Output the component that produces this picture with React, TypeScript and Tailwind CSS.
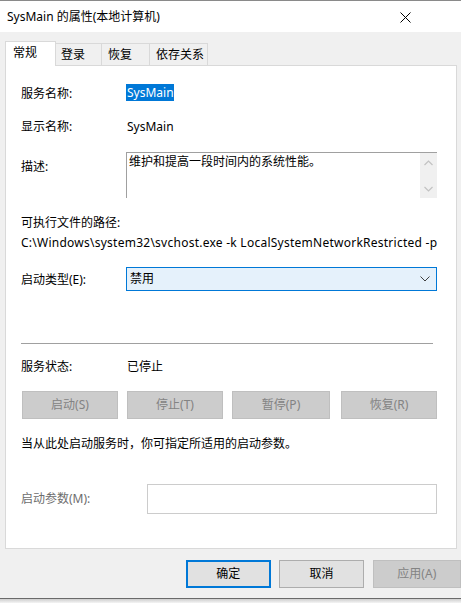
import React from "react";

const font = { fontFamily: '"Noto Sans", "Noto Sans CJK SC", sans-serif' };

function Btn({ label, w }: { label: string; w: string }) {
  return (
    <div
      className={`${w} h-[28px] bg-[#cccccc] border border-[#bfbfbf] flex items-center justify-center text-[12px] text-[#838383]`}
    >
      {label}
    </div>
  );
}

export default function App() {
  return (
    <div
      className="w-[461px] h-[603px] bg-[#f0f0f0] overflow-hidden flex flex-col text-black text-[12px] leading-[16px]"
      style={font}
    >
      <div className="h-px bg-[#8a8a8a]" />
      <div className="h-[31px] bg-white flex items-center pl-[7px] pr-[50px] justify-between">
        <span className="text-[12px]">SysMain 的属性(本地计算机)</span>
        <svg width="11" height="11" viewBox="0 0 11 11" className="mt-[1px]">
          <path d="M0.5 0.5 L10.5 10.5 M10.5 0.5 L0.5 10.5" stroke="#000" strokeWidth="1" />
        </svg>
      </div>
      <div className="pt-[9px] pl-[5px] pr-[4px] flex flex-col">
        <div className="h-[24px] flex items-end relative z-10">
          <div className="w-[51px] h-[25px] -mb-px bg-white border border-b-0 border-[#d9d9d9] pl-[7px] pt-[3px]">
            常规
          </div>
          <div className="w-[46px] h-[22px] bg-[#f0f0f0] border border-l-0 border-b-0 border-[#d9d9d9] pl-[5px] pt-[3px]">
            登录
          </div>
          <div className="w-[48px] h-[22px] bg-[#f0f0f0] border border-l-0 border-b-0 border-[#d9d9d9] pl-[6px] pt-[3px]">
            恢复
          </div>
          <div className="w-[58px] h-[22px] bg-[#f0f0f0] border border-l-0 border-b-0 border-[#d9d9d9] pl-[6px] pt-[3px]">
            依存关系
          </div>
        </div>
        <div className="h-[484px] bg-white border border-[#d9d9d9] pl-[15px] pr-[19px] pt-[18px] flex flex-col">
          <div className="h-[17px] flex items-center">
            <span className="w-[105px] mt-[2px]">服务名称:</span>
            <span className="bg-[#0078d7] text-white px-[1px] h-[17px] flex items-center w-[48px]">
              SysMain
            </span>
          </div>
          <div className="h-[17px] mt-[17px] flex items-center">
            <span className="w-[106px]">显示名称:</span>
            <span>SysMain</span>
          </div>
          <div className="h-[46px] mt-[17px] flex">
            <span className="w-[105px] pt-[7px]">描述:</span>
            <div className="flex-1 border-t border-l border-[#a0a0a0] flex">
              <div className="flex-1 pl-[2px] pt-[1px]">维护和提高一段时间内的系统性能。</div>
              <div className="w-[17px] bg-[#f0f0f0] flex flex-col items-center justify-between pt-[7px] pb-[6px]">
                <svg width="9" height="6" viewBox="0 0 9 6">
                  <path d="M0.5 5 L4.5 1 L8.5 5" stroke="#c2c2c2" strokeWidth="1.2" fill="none" />
                </svg>
                <svg width="9" height="6" viewBox="0 0 9 6">
                  <path d="M0.5 1 L4.5 5 L8.5 1" stroke="#c2c2c2" strokeWidth="1.2" fill="none" />
                </svg>
              </div>
            </div>
          </div>
          <div className="h-[16px] mt-[17px] flex items-center">可执行文件的路径:</div>
          <div className="h-[16px] mt-[4px] flex items-center whitespace-nowrap tracking-[0.25px]">
            C:\Windows\system32\svchost.exe -k LocalSystemNetworkRestricted -p
          </div>
          <div className="h-[24px] mt-[16px] flex items-center">
            <span className="w-[105px] mt-[2px]">启动类型(E):</span>
            <div className="flex-1 h-[24px] border border-[#0078d7] bg-[#e5f1fb] flex items-center justify-between pl-[3px] pr-[6px]">
              <span>禁用</span>
              <svg width="10" height="6" viewBox="0 0 10 6">
                <path d="M0.5 0.5 L5 5 L9.5 0.5" stroke="#404040" strokeWidth="1" fill="none" />
              </svg>
            </div>
          </div>
          <div className="h-px bg-[#a0a0a0] mt-[52px] mr-[4px]" />
          <div className="h-[16px] mt-[15px] flex items-center">
            <span className="w-[106px]">服务状态:</span>
            <span>已停止</span>
          </div>
          <div className="mt-[16px] flex pl-[1px]">
            <Btn label="启动(S)" w="w-[96px]" />
            <div className="w-[9px]" />
            <Btn label="停止(T)" w="w-[96px]" />
            <div className="w-[9px]" />
            <Btn label="暂停(P)" w="w-[98px]" />
            <div className="w-[11px]" />
            <Btn label="恢复(R)" w="w-[96px]" />
          </div>
          <div className="h-[16px] mt-[17px] flex items-center">当从此处启动服务时，你可指定所适用的启动参数。</div>
          <div className="h-[30px] mt-[32px] flex items-center">
            <span className="w-[126px] text-[#6d6d6d]">启动参数(M):</span>
            <div className="flex-1 h-[30px] border border-[#cccccc] bg-white" />
          </div>
        </div>
      </div>
      <div className="h-[49px] flex items-start pt-[11px] pl-[186px]">
        <div className="w-[86px] h-[28px] border-2 border-[#0078d7] bg-[#e1e1e1] flex items-center justify-center">
          确定
        </div>
        <div className="w-[9px]" />
        <div className="w-[86px] h-[28px] border border-[#adadad] bg-[#e1e1e1] flex items-center justify-center">
          取消
        </div>
        <div className="w-[9px]" />
        <div className="w-[90px] h-[28px] border border-[#bfbfbf] bg-[#cccccc] flex items-center justify-center text-[#838383]">
          应用(A)
        </div>
      </div>
      <div className="h-px bg-[#6a6a6a]" />
      <div className="flex-1 bg-gradient-to-b from-[#cfcfcf] to-[#f4f4f4]" />
    </div>
  );
}
